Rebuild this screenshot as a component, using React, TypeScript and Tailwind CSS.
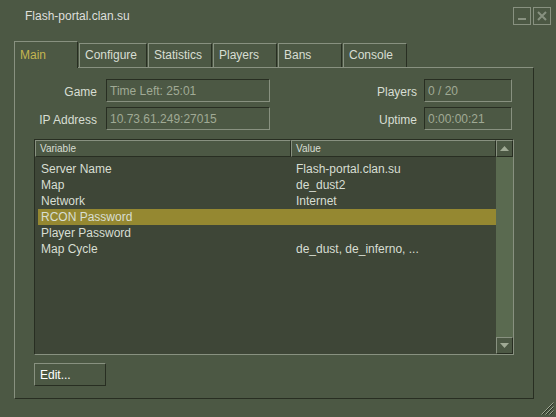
import React from 'react'

// Classic green console palette
// bg #4C5844, light #889180, dark #282E22, text #D8DED3, dim #A0AA95

const tabs = [
  { label: 'Main', width: 'w-[64px]' },
  { label: 'Configure', width: 'w-[68px]' },
  { label: 'Statistics', width: 'w-[64px]' },
  { label: 'Players', width: 'w-[64px]' },
  { label: 'Bans', width: 'w-[64px]' },
  { label: 'Console', width: 'w-[64px]' },
]

const rows = [
  { name: 'Server Name', value: 'Flash-portal.clan.su' },
  { name: 'Map', value: 'de_dust2' },
  { name: 'Network', value: 'Internet' },
  { name: 'RCON Password', value: '', selected: true },
  { name: 'Player Password', value: '' },
  { name: 'Map Cycle', value: 'de_dust, de_inferno, ...' },
]

const Field: React.FC<{ value: string; width: string }> = ({ value, width }) => (
  <div
    className={`${width} h-[23px] flex items-center pl-[3px] border border-t-[#282E22] border-l-[#282E22] border-b-[#889180] border-r-[#889180] text-[#A0AA95]`}
  >
    {value}
  </div>
)

const Arrow: React.FC<{ up?: boolean }> = ({ up }) => (
  <svg width="9" height="5" viewBox="0 0 9 5">
    {up ? (
      <polygon points="0,5 9,5 4.5,0" fill="#A0AA95" />
    ) : (
      <polygon points="0,0 9,0 4.5,5" fill="#A0AA95" />
    )}
  </svg>
)

const ScrollButton: React.FC<{ up?: boolean }> = ({ up }) => (
  <div className="w-[17px] h-[17px] flex items-center justify-center bg-[#4C5844] border border-t-[#889180] border-l-[#889180] border-b-[#282E22] border-r-[#282E22]">
    <Arrow up={up} />
  </div>
)

const App: React.FC = () => {
  return (
    <div
      className="relative w-[556px] h-[417px] bg-[#4C5844] text-[#D8DED3] text-[12px] overflow-hidden select-none"
      style={{ fontFamily: '"Liberation Sans", Arial, sans-serif' }}
    >
      {/* Title bar */}
      <div className="flex items-start justify-between h-[41px] pl-[25px] pr-[5px] pt-[7px]">
        <div className="leading-[18px] text-[#DEDFDC]">Flash-portal.clan.su</div>
        <div className="flex gap-[2px]">
          <div className="w-[18px] h-[18px] border border-[#889180] flex items-end justify-center pb-[4px]">
            <div className="w-[8px] h-[2px] bg-[#889180]" />
          </div>
          <div className="w-[18px] h-[18px] border border-[#889180] flex items-center justify-center">
            <svg width="10" height="10" viewBox="0 0 10 10">
              <path d="M1 1 L9 9 M9 1 L1 9" stroke="#889180" strokeWidth="2" />
            </svg>
          </div>
        </div>
      </div>

      {/* Tabs */}
      <div className="flex items-end gap-[1px] ml-[14px] h-[26px] relative z-10">
        {tabs.map((tab, i) =>
          i === 0 ? (
            <div
              key={tab.label}
              className={`${tab.width} h-[27px] -mb-px bg-[#4C5844] border-t border-l border-r border-t-[#889180] border-l-[#889180] border-r-[#282E22] pl-[5px] pt-[6px] leading-[14px] text-[#C4B550]`}
            >
              {tab.label}
            </div>
          ) : (
            <div
              key={tab.label}
              className={`${tab.width} h-[24px] border-t border-l border-r border-t-[#889180] border-l-[#889180] border-r-[#282E22] pl-[5px] pt-[4px] leading-[14px]`}
            >
              {tab.label}
            </div>
          )
        )}
      </div>

      {/* Panel */}
      <div className="ml-[14px] w-[520px] h-[332px] border border-t-[#889180] border-l-[#889180] border-b-[#282E22] border-r-[#282E22] flex flex-col">
        {/* Info fields */}
        <div className="flex flex-col gap-[5px] mt-[11px]">
          <div className="flex items-center">
            <div className="w-[82px] text-right pt-[2px]">Game</div>
            <div className="ml-[9px]">
              <Field value="Time Left: 25:01" width="w-[164px]" />
            </div>
            <div className="w-[147px] text-right pt-[2px]">Players</div>
            <div className="ml-[7px]">
              <Field value="0 / 20" width="w-[88px]" />
            </div>
          </div>
          <div className="flex items-center">
            <div className="w-[82px] text-right pt-[2px]">IP Address</div>
            <div className="ml-[9px]">
              <Field value="10.73.61.249:27015" width="w-[164px]" />
            </div>
            <div className="w-[147px] text-right pt-[2px]">Uptime</div>
            <div className="ml-[7px]">
              <Field value="0:00:00:21" width="w-[88px]" />
            </div>
          </div>
        </div>

        {/* List */}
        <div className="ml-[19px] mt-[9px] w-[480px] h-[216px] border border-t-[#282E22] border-l-[#282E22] border-b-[#889180] border-r-[#889180] flex">
          <div className="flex-1 flex flex-col bg-[#3E4637]">
            <div className="flex h-[17px] bg-[#4C5844] text-[10px]">
              <div className="w-[256px] h-full flex items-center pl-[4px] border border-t-[#889180] border-l-[#889180] border-b-[#282E22] border-r-[#282E22]">
                Variable
              </div>
              <div className="flex-1 h-full flex items-center pl-[4px] border border-t-[#889180] border-l-[#889180] border-b-[#282E22] border-r-[#282E22]">
                Value
              </div>
            </div>
            <div className="flex flex-col pt-[4px] pl-[3px]">
              {rows.map((row) => (
                <div
                  key={row.name}
                  className={`flex h-[16px] items-center leading-[16px] ${row.selected ? 'bg-[#958831]' : ''}`}
                >
                  <div className="w-[255px] pl-[3px]">{row.name}</div>
                  <div className="flex-1 pl-[3px]">{row.value}</div>
                </div>
              ))}
            </div>
          </div>
          <div className="w-[17px] flex flex-col">
            <ScrollButton up />
            <div className="flex-1 bg-[#5A6A50]" />
            <ScrollButton />
          </div>
        </div>

        {/* Edit button */}
        <div className="ml-[19px] mt-[8px]">
          <div className="w-[72px] h-[23px] flex items-center pl-[5px] border border-t-[#889180] border-l-[#889180] border-b-[#282E22] border-r-[#282E22] text-white">
            Edit...
          </div>
        </div>
      </div>

      {/* Resize grip */}
      <svg className="absolute right-[2px] bottom-[2px]" width="13" height="13" viewBox="0 0 13 13">
        <path d="M12.5 0.5 L0.5 12.5 M12.5 4.5 L4.5 12.5 M12.5 8.5 L8.5 12.5" stroke="#A0AA95" strokeWidth="1" />
        <path d="M12.5 1.5 L1.5 12.5 M12.5 5.5 L5.5 12.5 M12.5 9.5 L9.5 12.5" stroke="#282E22" strokeWidth="1" />
      </svg>
    </div>
  )
}

export default App
